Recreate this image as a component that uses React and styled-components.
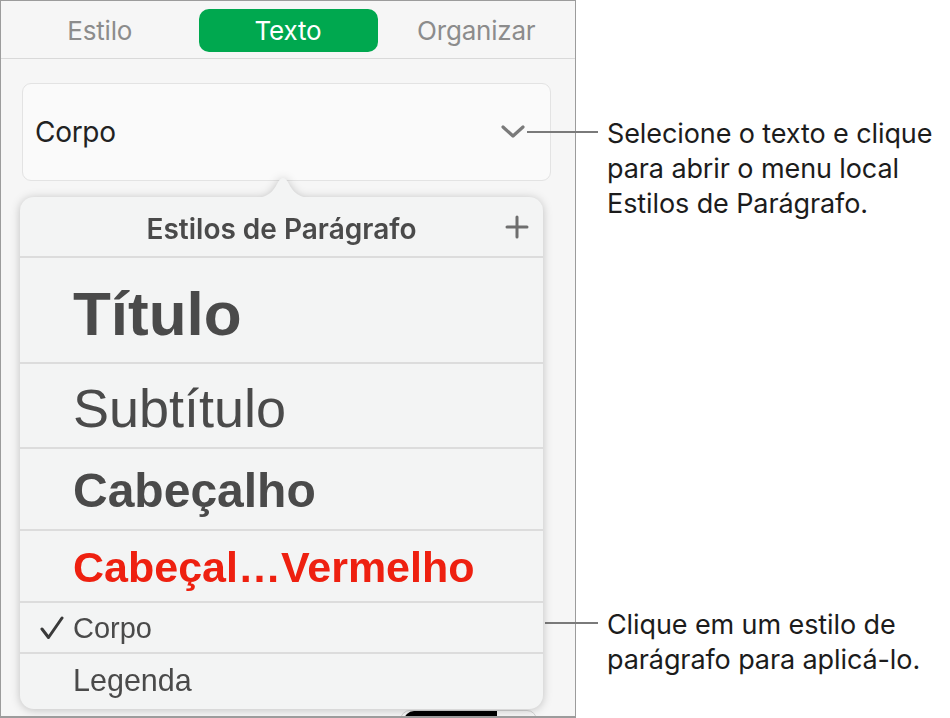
import styled, { createGlobalStyle } from 'styled-components';

const GlobalStyle = createGlobalStyle`
  html, body {
    margin: 0;
    padding: 0;
    background: #ffffff;
  }
  body {
    font-family: Inter, "Noto Sans", sans-serif;
    -webkit-font-smoothing: antialiased;
  }
`;

const Page = styled.div`
  display: flex;
  width: 950px;
  height: 718px;
  overflow: hidden;
`;

const Sidebar = styled.aside`
  box-sizing: border-box;
  width: 576px;
  height: 718px;
  flex-shrink: 0;
  border: 1px solid #9c9c9c;
  border-bottom-width: 2px;
  background: #f6f6f6;
  display: flex;
  flex-direction: column;
  overflow: hidden;
  & > * {
    flex-shrink: 0;
  }
`;

const TabBar = styled.nav`
  display: grid;
  grid-template-columns: 1fr 179px 1fr;
  align-items: start;
  box-sizing: border-box;
  height: 58px;
  padding-top: 8px;
  border-bottom: 1px solid #d9d9d9;
`;

const Tab = styled.div`
  height: 43px;
  display: flex;
  align-items: center;
  justify-content: center;
  border-radius: 10px;
  font-size: 26px;
  font-weight: 400;
  letter-spacing: -0.2px;
  color: ${(p) => (p.$active ? '#ffffff' : '#8c8c8c')};
  background: ${(p) => (p.$active ? '#00a84f' : 'transparent')};
`;

const Select = styled.div`
  margin: 24px 24px 0 21px;
  height: 98px;
  box-sizing: border-box;
  border: 1px solid #e3e3e3;
  border-radius: 9px;
  background: #fafafa;
  display: flex;
  align-items: center;
  justify-content: space-between;
  padding: 0 25px 0 12px;
  font-size: 28px;
  letter-spacing: -0.3px;
  color: #222222;
`;

const Popup = styled.div`
  position: relative;
  margin: 16px 32px 0 19px;
  filter: drop-shadow(0 1px 5px rgba(0, 0, 0, 0.22));
`;

const Arrow = styled.svg`
  position: absolute;
  top: -26px;
  left: 223px;
  display: block;
`;

const PopupBody = styled.div`
  height: 512px;
  border-radius: 14px;
  background: #f3f4f4;
  overflow: hidden;
  display: flex;
  flex-direction: column;
`;

const PopupHeader = styled.div`
  display: grid;
  grid-template-columns: 1fr auto 1fr;
  align-items: center;
  height: 59px;
  padding: 0 14px;
  border-bottom: 2px solid #dcdcdc;
  font-size: 28px;
  font-weight: 600;
  color: #4a4a4a;
  flex-shrink: 0;
`;

const HeaderTitle = styled.span`
  grid-column: 2;
  margin-top: 4px;
`;

const AddButton = styled.span`
  grid-column: 3;
  justify-self: end;
  display: flex;
`;

const StyleRow = styled.div`
  display: flex;
  align-items: center;
  height: ${(p) => p.$h}px;
  padding-left: 20px;
  border-bottom: ${(p) => (p.$last ? 'none' : '2px solid #dcdcdc')};
  box-sizing: border-box;
  flex-shrink: 0;
`;

const CheckCol = styled.span`
  width: 33px;
  display: flex;
  align-items: center;
`;

const StyleLabel = styled.span`
  font-family: "Liberation Sans", Arial, sans-serif;
  font-size: ${(p) => p.$size}px;
  font-weight: ${(p) => (p.$bold ? 700 : 400)};
  color: ${(p) => p.$color || '#4a4a4a'};
  line-height: 1;
  margin-top: ${(p) => p.$shift || 0}px;
  white-space: nowrap;
`;

const Peek = styled.div`
  margin: 1px 0 0 399px;
  width: 137px;
  height: 24px;
  box-sizing: border-box;
  border: 1px solid #d2d2d2;
  border-radius: 10px 10px 0 0;
  display: flex;
  align-items: flex-start;
  padding: 0 0 0 3px;
  gap: 18px;
`;

const Swatch = styled.span`
  width: 93px;
  height: 24px;
  background: #000;
  border-radius: 10px 0 0 0;
`;

const RedDot = styled.span`
  width: 8px;
  height: 8px;
  margin-top: 5px;
  border-radius: 50%;
  background: #f04a3a;
`;

const Notes = styled.div`
  flex: 1;
  display: flex;
  flex-direction: column;
`;

const Callout = styled.div`
  display: flex;
  align-items: flex-start;
  margin-top: ${(p) => p.$top}px;
`;

const Leader = styled.span`
  flex-shrink: 0;
  width: ${(p) => p.$w}px;
  margin-left: -${(p) => p.$w - 22}px;
  margin-top: ${(p) => p.$y}px;
  height: 2px;
  background: #7a7a7a;
`;

const NoteText = styled.p`
  margin: 0 0 0 9px;
  font-size: 27px;
  line-height: 35px;
  letter-spacing: -0.1px;
  color: #1c1c1c;
  white-space: nowrap;
`;

const Chevron = () => (
  <svg width="24" height="14" viewBox="0 0 24 14">
    <polyline points="2,2 12,11 22,2" fill="none" stroke="#7a7a7a" strokeWidth="3.2" strokeLinecap="round" strokeLinejoin="round" />
  </svg>
);

const Plus = () => (
  <svg width="24" height="24" viewBox="0 0 24 24">
    <path d="M12 2 V22 M2 12 H22" stroke="#6e6e6e" strokeWidth="3" strokeLinecap="round" />
  </svg>
);

const Check = () => (
  <svg width="24" height="24" viewBox="0 0 24 24">
    <path d="M2 13 L8.5 21.5 L22 2" fill="none" stroke="#3a3a3a" strokeWidth="3" strokeLinecap="round" strokeLinejoin="round" />
  </svg>
);

const styles = [
  { label: 'Título', size: 62, bold: true, h: 106, shift: 8 },
  { label: 'Subtítulo', size: 54, h: 85, shift: 4 },
  { label: 'Cabeçalho', size: 48, bold: true, h: 82, shift: 4 },
  { label: 'Cabeçal…Vermelho', size: 43, bold: true, h: 72, color: '#ee2010', shift: 2 },
  { label: 'Corpo', size: 29, h: 51, checked: true, shift: 2 },
  { label: 'Legenda', size: 30.5, h: 55, last: true, shift: -2 },
];

export default function App() {
  return (
    <Page>
      <GlobalStyle />
      <Sidebar>
        <TabBar>
          <Tab>Estilo</Tab>
          <Tab $active>Texto</Tab>
          <Tab>Organizar</Tab>
        </TabBar>
        <Select>
          <span>Corpo</span>
          <Chevron />
        </Select>
        <Popup>
          <Arrow width="80" height="28" viewBox="0 0 80 28">
            <path d="M0 28 C 20 28, 28 25, 34 13 Q 40 1 46 13 C 52 25, 60 28, 80 28 Z" fill="#f3f4f4" />
          </Arrow>
          <PopupBody>
            <PopupHeader>
              <HeaderTitle>Estilos de Parágrafo</HeaderTitle>
              <AddButton><Plus /></AddButton>
            </PopupHeader>
            {styles.map((s) => (
              <StyleRow key={s.label} $h={s.h} $last={s.last}>
                <CheckCol>{s.checked ? <Check /> : null}</CheckCol>
                <StyleLabel $size={s.size} $bold={s.bold} $color={s.color} $shift={s.shift}>
                  {s.label}
                </StyleLabel>
              </StyleRow>
            ))}
          </PopupBody>
        </Popup>
        <Peek>
          <Swatch />
          <RedDot />
        </Peek>
      </Sidebar>
      <Notes>
        <Callout $top={116}>
          <Leader $w={71} $y={15} />
          <NoteText>
            Selecione o texto e clique<br />
            para abrir o menu local<br />
            Estilos de Parágrafo.
          </NoteText>
        </Callout>
        <Callout $top={386}>
          <Leader $w={53} $y={15} />
          <NoteText>
            Clique em um estilo de<br />
            parágrafo para aplicá-lo.
          </NoteText>
        </Callout>
      </Notes>
    </Page>
  );
}
